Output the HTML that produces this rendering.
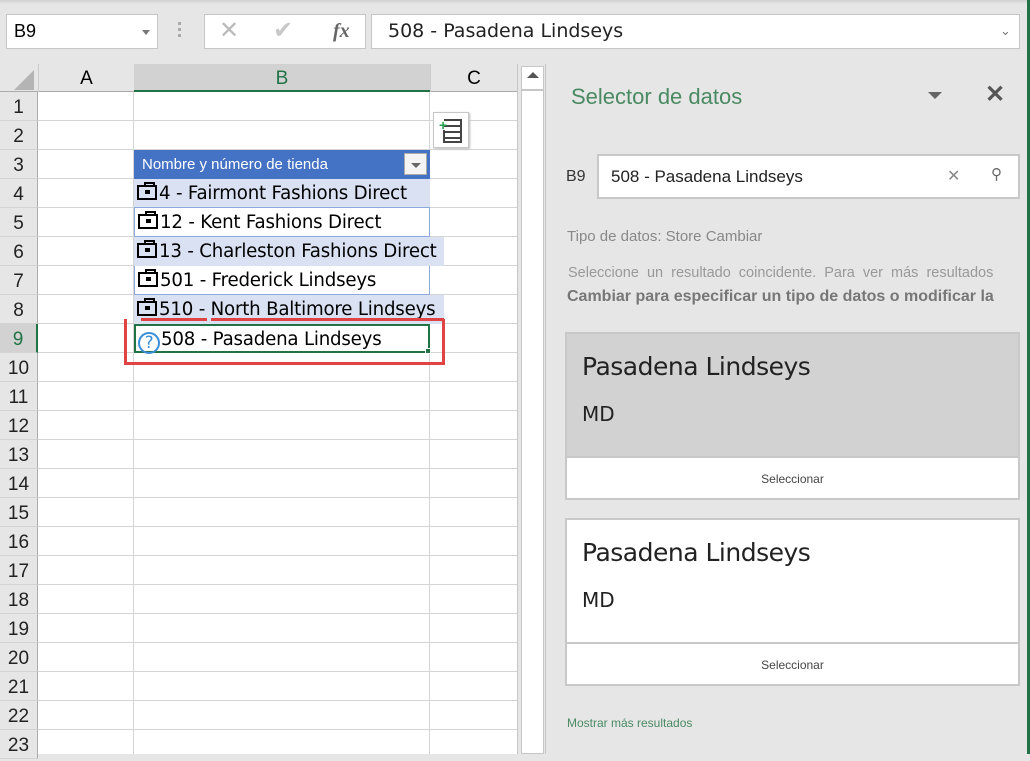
<!DOCTYPE html>
<html><head><meta charset="utf-8"><style>
*{margin:0;padding:0;box-sizing:border-box}
body{width:1030px;height:754px;overflow:hidden;background:#e6e6e6;font-family:"Liberation Sans",sans-serif;position:relative}
.a{position:absolute}
.box{background:#fff;border:1px solid #c6c6c6}
.rh{position:absolute;left:0;width:38px;height:29px;background:#e6e6e6;border-right:1px solid #ababab;border-bottom:1px solid #d4d4d4;font-size:19px;color:#222;text-align:center;line-height:31px}
.cell{position:absolute;left:134px;width:296px;height:29px;font-size:18.2px;line-height:30px;color:#000;padding-left:3px;white-space:nowrap;font-family:"DejaVu Sans","Liberation Sans",sans-serif;letter-spacing:-0.2px}
.band{background:#d9e1f2}
.ic{display:inline-block;width:20px;height:15px;border:2px solid #000;vertical-align:-1px;margin-right:2px;position:relative}
.ic:before{content:"";position:absolute;left:5px;top:-5px;width:7px;height:3px;border:2px solid #000;border-bottom:none}
.ic:after{content:"";position:absolute;left:6px;top:3px;width:5px;height:4px;background:#000}
.card{position:absolute;left:565px;width:455px;height:168px;border:2px solid #c8c8c8;background:#fff}
.card .t{position:absolute;left:15px;top:18px;font-size:25px;color:#222;font-family:"DejaVu Sans","Liberation Sans",sans-serif;letter-spacing:-0.5px}
.card .m{position:absolute;left:15px;top:68px;font-size:20px;color:#222;font-family:"DejaVu Sans",sans-serif}
.card .s{position:absolute;left:0;right:0;top:122px;bottom:0;border-top:2px solid #c8c8c8;background:#fff;text-align:center;font-size:12px;color:#444;line-height:42px}
</style></head><body>
<div class="a" style="left:0;top:0;width:1030px;height:4px;background:linear-gradient(#d0d0d0,#e6e6e6)"></div>
<div class="a box" style="left:6px;top:14px;width:152px;height:35px;font-size:18px;line-height:33px;padding-left:7px">B9<span class="a" style="left:135px;top:15px;border:4px solid transparent;border-top:5px solid #777"></span></div>
<div class="a" style="left:178px;top:22px;width:3px;height:3px;background:#aaa;box-shadow:0 6px #aaa,0 12px #aaa"></div>
<div class="a box" style="left:204px;top:14px;width:162px;height:35px;color:#bbb;font-size:24px;line-height:32px">
<span class="a" style="left:14px">✕</span><span class="a" style="left:68px;color:#c8c8c8">✔</span><span class="a" style="left:128px;font-family:'Liberation Serif',serif;font-style:italic;font-weight:bold;color:#666;font-size:20px">fx</span></div>
<div class="a box" style="left:371px;top:14px;width:649px;height:35px;font-size:19px;line-height:33px;padding-left:16px;font-family:'DejaVu Sans',sans-serif;color:#222">508 - Pasadena Lindseys<span class="a" style="left:628px;top:0;font-size:13px;color:#777">&#8964;</span></div>
<div class="a" style="left:0;top:64px;width:517px;height:690px;background:#fff"></div>
<div class="a" style="left:38px;top:92px;width:479px;height:662px;background:repeating-linear-gradient(to bottom,transparent 0,transparent 28px,#d4d4d4 28px,#d4d4d4 29px)"></div>
<div class="a" style="left:133px;top:92px;width:1px;height:662px;background:#d4d4d4"></div>
<div class="a" style="left:429px;top:92px;width:1px;height:662px;background:#d4d4d4"></div>
<div class="a" style="left:0;top:64px;width:517px;height:28px;background:#e6e6e6;border-bottom:1px solid #ababab"></div>
<div class="a" style="left:14px;top:70px;border-left:20px solid transparent;border-bottom:20px solid #b4b4b4"></div>
<div class="a" style="left:38px;top:64px;width:96px;height:28px;border-left:1px solid #ccc;text-align:center;font-size:19px;line-height:30px">A</div>
<div class="a" style="left:134px;top:64px;width:296px;height:28px;background:#d2d2d2;border-bottom:2px solid #217346;text-align:center;font-size:19px;line-height:30px;color:#217346">B</div>
<div class="a" style="left:430px;top:64px;width:87px;height:28px;border-left:1px solid #ccc;text-align:center;font-size:19px;line-height:30px">C</div>
<div class="rh" style="top:92px">1</div><div class="rh" style="top:121px">2</div><div class="rh" style="top:150px">3</div><div class="rh" style="top:179px">4</div><div class="rh" style="top:208px">5</div><div class="rh" style="top:237px">6</div><div class="rh" style="top:266px">7</div><div class="rh" style="top:295px">8</div><div class="rh" style="top:324px;background:#d2d2d2;color:#217346;border-right:2px solid #217346">9</div><div class="rh" style="top:353px">10</div><div class="rh" style="top:382px">11</div><div class="rh" style="top:411px">12</div><div class="rh" style="top:440px">13</div><div class="rh" style="top:469px">14</div><div class="rh" style="top:498px">15</div><div class="rh" style="top:527px">16</div><div class="rh" style="top:556px">17</div><div class="rh" style="top:585px">18</div><div class="rh" style="top:614px">19</div><div class="rh" style="top:643px">20</div><div class="rh" style="top:672px">21</div><div class="rh" style="top:701px">22</div><div class="rh" style="top:730px">23</div>
<div class="a" style="left:134px;top:150px;width:296px;height:29px;background:#4472c4;color:#fff;font-size:15px;line-height:30px;padding-left:8px">Nombre y número de tienda<div class="a" style="left:270px;top:3px;width:23px;height:22px;background:#f4f4f4;border:1px solid #aaa"><span class="a" style="left:6px;top:9px;border:5px solid transparent;border-top:5px solid #666"></span></div></div>
<div class="a" style="left:134px;top:179px;width:296px;height:145px;border-left:1px solid #8ea9db;border-right:1px solid #8ea9db"></div>
<div class="cell band" style="top:179px;border-bottom:1px solid #8ea9db"><span class="ic"></span>4 - Fairmont Fashions Direct</div>
<div class="cell" style="top:208px;border-bottom:1px solid #8ea9db;border-left:1px solid #8ea9db;border-right:1px solid #8ea9db"><span class="ic"></span>12 - Kent Fashions Direct</div>
<div class="cell band" style="top:237px;width:310px"><span class="ic"></span>13 - Charleston Fashions Direct</div>
<div class="cell" style="top:266px;border:1px solid #8ea9db;border-top:none"><span class="ic"></span>501 - Frederick Lindseys</div>
<div class="cell band" style="top:295px;width:310px"><span class="ic"></span>510 - North Baltimore Lindseys</div>
<div class="a" style="left:141px;top:318px;width:66px;height:3px;background:#e04343"></div>
<div class="a" style="left:211px;top:318px;width:233px;height:3px;background:#e04343"></div>
<div class="cell" style="top:324px;border:2px solid #217346;line-height:27px;padding-left:2px;background:#fff"><span style="display:inline-block;width:22px;height:22px;border:2px solid #3a8fd8;border-radius:50%;color:#3a8fd8;font-size:17px;line-height:18px;text-align:center;vertical-align:-3px;margin-right:1px">?</span>508 - Pasadena Lindseys</div>
<div class="a" style="left:425px;top:348px;width:6px;height:6px;background:#217346;border:1px solid #fff"></div>
<div class="a" style="left:124px;top:319px;width:321px;height:46px;border:3px solid #e04343;border-top:none"></div>
<div class="a" style="left:124px;top:319px;width:3px;height:3px;background:#e04343"></div>
<div class="a" style="left:433px;top:112px;width:36px;height:36px;background:#fff;border:1px solid #c6c6c6;box-shadow:1px 1px 2px #bbb">
<div class="a" style="left:10px;top:6px;width:18px;height:24px;border:2px solid #444;border-left:none;background:repeating-linear-gradient(#fff 0 4px,#444 4px 6px)"></div>
<div class="a" style="left:9px;top:17px;width:2px;height:13px;background:#444"></div>
<div class="a" style="left:5px;top:7px;color:#22a04b;font-size:14px;font-weight:bold;line-height:10px">+</div></div>
<div class="a" style="left:517px;top:64px;width:29px;height:690px;background:#e6e6e6;border-left:1px solid #c6c6c6;border-right:1px solid #c6c6c6"></div>
<div class="a" style="left:521px;top:66px;width:23px;height:24px;background:#fff;border:1px solid #c6c6c6"><span class="a" style="left:5px;top:5px;border:6px solid transparent;border-bottom:6px solid #555;border-top:none"></span></div>
<div class="a" style="left:521px;top:90px;width:23px;height:664px;background:#fff;border:1px solid #c6c6c6"></div>
<div class="a" style="left:1027px;top:0;width:3px;height:754px;background:#217346"></div>
<div class="a" style="left:571px;top:84px;font-size:22px;color:#4a8a62">Selector de datos</div>
<div class="a" style="left:928px;top:92px;border:7px solid transparent;border-top:7px solid #666"></div>
<div class="a" style="left:985px;top:80px;font-size:24px;font-weight:bold;color:#555">✕</div>
<div class="a" style="left:566px;top:168px;font-size:16px;color:#333">B9</div>
<div class="a" style="left:597px;top:154px;width:423px;height:45px;background:#fff;border:2px solid #c8c8c8;font-size:17px;line-height:41px;padding-left:12px;color:#222">508 - Pasadena Lindseys<span class="a" style="left:348px;top:0;color:#888;font-size:16px">✕</span><span class="a" style="left:392px;top:-2px;color:#666;font-size:15px">⚲</span></div>
<div class="a" style="left:567px;top:228px;font-size:15px;color:#888">Tipo de datos: Store Cambiar</div>
<div class="a" style="left:568px;top:265px;font-size:14.5px;color:#999;white-space:nowrap;word-spacing:4px">Seleccione un resultado coincidente. Para ver más resultados</div>
<div class="a" style="left:567px;top:288px;font-size:16px;color:#777;font-weight:bold;white-space:nowrap">Cambiar para especificar un tipo de datos o modificar la</div>
<div class="card" style="top:332px;background:#d2d2d2"><div class="t">Pasadena Lindseys</div><div class="m">MD</div><div class="s">Seleccionar</div></div>
<div class="card" style="top:518px"><div class="t">Pasadena Lindseys</div><div class="m">MD</div><div class="s">Seleccionar</div></div>
<div class="a" style="left:567px;top:716px;font-size:12px;color:#4a8a62">Mostrar más resultados</div>
</body></html>
